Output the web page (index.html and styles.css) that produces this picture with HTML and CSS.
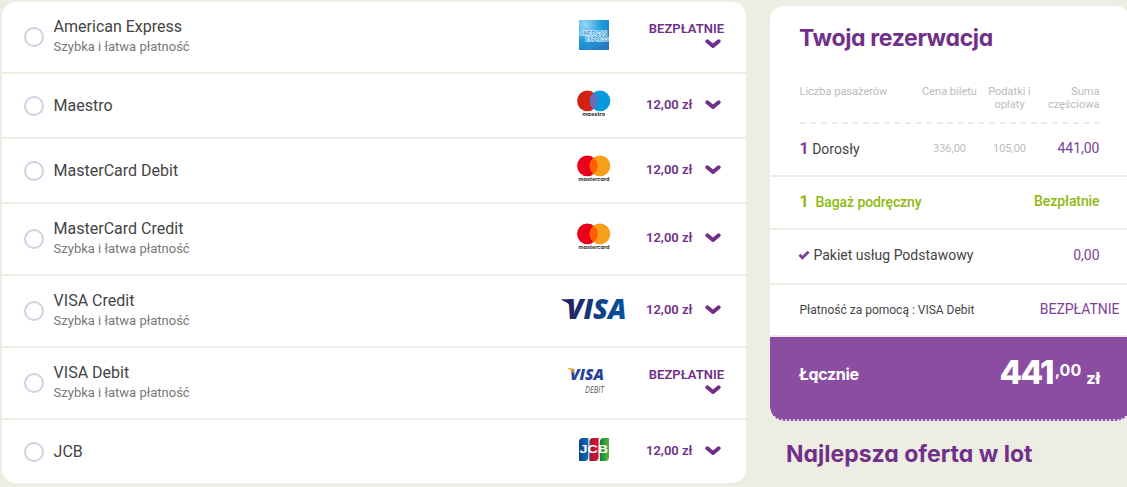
FILE: index.html
```html
<!DOCTYPE html>
<html lang="pl">
<head>
  <meta charset="UTF-8" />
  <meta name="viewport" content="width=device-width, initial-scale=1.0"/>
  <title>Płatność</title>
  <link rel="stylesheet" href="styles.css">
</head>
<body>

  <!-- Shared shapes -->
  <svg class="sprite" aria-hidden="true">
    <symbol id="chevron" viewBox="0 0 16 10">
      <path d="M2.3 2.3 L8 7.1 L13.7 2.3" fill="none" stroke="#70308a" stroke-width="3.9" stroke-linecap="round" stroke-linejoin="round"/>
    </symbol>
    <symbol id="mastercard" viewBox="0 0 34 28">
      <circle cx="10.4" cy="10.9" r="10.3" fill="#eb001b"/>
      <circle cx="23" cy="10.9" r="10.3" fill="#f79e1b"/>
      <path d="M16.7 2.7 A10.3 10.3 0 0 1 16.7 19.1 A10.3 10.3 0 0 1 16.7 2.7 Z" fill="#ff5f00"/>
      <text x="1.5" y="26.2" textLength="31" lengthAdjust="spacingAndGlyphs" class="logo-label">mastercard</text>
    </symbol>
  </svg>

  <main class="payments">
    <label class="method tall">
      <span class="radio"></span>
      <span class="name">American Express<small>Szybka i łatwa płatność</small></span>
      <span class="logo">
        <svg class="amex" viewBox="0 0 30 30">
          <defs>
            <radialGradient id="amex-bg" cx="0.2" cy="0.15" r="1.1">
              <stop offset="0" stop-color="#9ad7f5"/>
              <stop offset="0.5" stop-color="#1c9ddb"/>
              <stop offset="1" stop-color="#2a70c0"/>
            </radialGradient>
          </defs>
          <rect width="30" height="30" fill="url(#amex-bg)"/>
          <text x="1" y="15.2" textLength="27" lengthAdjust="spacingAndGlyphs" class="amex-text">AMERICAN</text>
          <text x="6.5" y="21.4" textLength="23" lengthAdjust="spacingAndGlyphs" class="amex-text">EXPRESS</text>
        </svg>
      </span>
      <span class="price free">BEZPŁATNIE<svg class="chevron"><use href="#chevron"/></svg></span>
    </label>

    <label class="method">
      <span class="radio"></span>
      <span class="name">Maestro</span>
      <span class="logo">
        <svg class="circles" viewBox="0 0 34 28">
          <circle cx="10.4" cy="10.9" r="10.3" fill="#d42114"/>
          <circle cx="23" cy="10.9" r="10.3" fill="#0499df"/>
          <path d="M16.7 2.7 A10.3 10.3 0 0 1 16.7 19.1 A10.3 10.3 0 0 1 16.7 2.7 Z" fill="#6c6bbd"/>
          <text x="5.2" y="26.2" textLength="23" lengthAdjust="spacingAndGlyphs" class="logo-label">maestro</text>
        </svg>
      </span>
      <span class="price">12,00 zł<svg class="chevron"><use href="#chevron"/></svg></span>
    </label>

    <label class="method">
      <span class="radio"></span>
      <span class="name">MasterCard Debit</span>
      <span class="logo"><svg class="circles"><use href="#mastercard"/></svg></span>
      <span class="price">12,00 zł<svg class="chevron"><use href="#chevron"/></svg></span>
    </label>

    <label class="method tall">
      <span class="radio"></span>
      <span class="name">MasterCard Credit<small>Szybka i łatwa płatność</small></span>
      <span class="logo"><svg class="circles"><use href="#mastercard"/></svg></span>
      <span class="price">12,00 zł<svg class="chevron"><use href="#chevron"/></svg></span>
    </label>

    <label class="method tall">
      <span class="radio"></span>
      <span class="name">VISA Credit<small>Szybka i łatwa płatność</small></span>
      <span class="logo">
        <svg class="visa" viewBox="0 0 66 22">
          <defs>
            <linearGradient id="visa-blue" gradientUnits="userSpaceOnUse" x1="4" y1="0" x2="64" y2="0">
              <stop offset="0" stop-color="#241f5d"/>
              <stop offset="0.5" stop-color="#123c80"/>
              <stop offset="1" stop-color="#0253a0"/>
            </linearGradient>
          </defs>
          <path d="M0.5 0.2 H8.6 Q10.6 0.3 11.2 2.3 L13.4 13 Q10 4 0.5 0.9 Z" fill="#241f5d"/>
          <text x="5.5" y="20.3" textLength="60" lengthAdjust="spacingAndGlyphs" class="visa-text" fill="url(#visa-blue)">VISA</text>
        </svg>
      </span>
      <span class="price">12,00 zł<svg class="chevron"><use href="#chevron"/></svg></span>
    </label>

    <label class="method tall">
      <span class="radio"></span>
      <span class="name">VISA Debit<small>Szybka i łatwa płatność</small></span>
      <span class="logo">
        <svg class="visa-debit" viewBox="0 0 38 26">
          <text x="3" y="12" textLength="34" lengthAdjust="spacingAndGlyphs" class="visa-debit-text">VISA</text>
          <path d="M0.4 0.3 H5 Q6.2 0.4 6.5 1.5 L7.7 6.8 Q5.5 2 0.4 0.7 Z" fill="#f0a52b"/>
          <text x="18" y="25" textLength="19" lengthAdjust="spacingAndGlyphs" class="debit-text">DEBIT</text>
        </svg>
      </span>
      <span class="price free">BEZPŁATNIE<svg class="chevron"><use href="#chevron"/></svg></span>
    </label>

    <label class="method">
      <span class="radio"></span>
      <span class="name">JCB</span>
      <span class="logo">
        <svg class="jcb" viewBox="0 0 30 23">
          <defs>
            <linearGradient id="jcb-blue"><stop offset="0" stop-color="#153d8a"/><stop offset="1" stop-color="#0572bd"/></linearGradient>
            <linearGradient id="jcb-red"><stop offset="0" stop-color="#7c2541"/><stop offset="0.7" stop-color="#d80f33"/></linearGradient>
            <linearGradient id="jcb-green"><stop offset="0" stop-color="#0b8440"/><stop offset="1" stop-color="#5cb637"/></linearGradient>
          </defs>
          <path d="M4 0 H9.4 V19 Q9.4 23 5.4 23 H0 V4 Q0 0 4 0 Z" fill="url(#jcb-blue)"/>
          <path d="M14.4 0 H19.6 V19 Q19.6 23 15.6 23 H10.4 V4 Q10.4 0 14.4 0 Z" fill="url(#jcb-red)"/>
          <path d="M24.8 0 H30 V19 Q30 23 26 23 H20.8 V4 Q20.8 0 24.8 0 Z" fill="url(#jcb-green)"/>
          <text x="0.5" y="15.2" textLength="28.5" lengthAdjust="spacingAndGlyphs" class="jcb-text">JCB</text>
        </svg>
      </span>
      <span class="price">12,00 zł<svg class="chevron"><use href="#chevron"/></svg></span>
    </label>
  </main>

  <aside class="sidebar">
    <section class="booking">
      <h2>Twoja rezerwacja</h2>

      <div class="fare fare-head">
        <span>Liczba pasażerów</span>
        <span>Cena biletu</span>
        <span>Podatki i opłaty</span>
        <span>Suma częściowa</span>
      </div>
      <svg class="dashes" width="300" height="2">
        <line x1="0" y1="1" x2="300" y2="1" stroke="#edede3" stroke-width="2" stroke-dasharray="6 4.5"/>
      </svg>

      <div class="fare fare-row">
        <span class="who"><b>1</b> Dorosły</span>
        <span>336,00</span>
        <span>105,00</span>
        <span class="sum">441,00</span>
      </div>

      <div class="line baggage">
        <span><b>1</b>Bagaż podręczny</span>
        <span>Bezpłatnie</span>
      </div>

      <div class="line package">
        <span><svg class="check" viewBox="0 0 12 10"><path d="M1.4 4.8 L4.4 7.7 L10.6 1.7" fill="none" stroke="#7d3f98" stroke-width="2.9"/></svg>Pakiet usług Podstawowy</span>
        <span class="sum">0,00</span>
      </div>

      <div class="line payment">
        <span>Płatność za pomocą : VISA Debit</span>
        <span class="sum">BEZPŁATNIE</span>
      </div>

      <div class="total">
        <span class="total-label">Łącznie</span>
        <span class="amount">441<span class="cents">,00</span><span class="currency">zł</span></span>
      </div>
    </section>

    <h2 class="offer">Najlepsza oferta w lot</h2>
  </aside>

</body>
</html>
```

FILE: styles.css
```css
:root {
  --page: #edede3;
  --purple: #70308a;
  --purple-light: #7d3f98;
  --purple-box: #8a4da1;
  --green: #8dba0e;
  --grey: #bbb;
}

* {
  box-sizing: border-box;
}

body {
  margin: 0;
  height: 487px;
  overflow: hidden;
  display: flex;
  align-items: flex-start;
  background: var(--page);
  color: #444;
  font-family: Roboto, sans-serif;
}

svg {
  display: block;
  flex: none;
  overflow: visible;
}

.sprite {
  display: none;
}

/* Payment methods */
.payments {
  flex: none;
  width: 744px;
  margin: 2px 24px 0 2px;
  background: #fff;
  border-radius: 14px;
  overflow: hidden;
}

.method {
  display: grid;
  grid-template-columns: 30px 505px 70px 1fr;
  height: 65px;
  padding: 0 22px;
  border-bottom: 2px solid var(--page);
}

.method.tall {
  height: 72px;
}

.method:last-child {
  height: 63px;
  border-bottom: 0;
}

.radio {
  width: 20px;
  height: 20px;
  margin-top: 22px;
  border: 2px solid #d9cbe3;
  border-radius: 50%;
}

.tall .radio {
  margin-top: 25px;
}

.name {
  padding-top: 22px;
  margin-left: -0.4px;
  font-size: 16px;
  line-height: 20px;
}

.tall .name {
  padding-top: 15px;
}

.name small {
  display: block;
  font-size: 13px;
  color: #777;
}

.logo {
  display: flex;
  justify-content: center;
  align-items: flex-start;
  padding-top: 16px;
}

.tall .logo {
  padding-top: 19px;
}

.circles {
  width: 34px;
  height: 28px;
}

.logo-label {
  font: bold 5.4px Inter, sans-serif;
  font-feature-settings: "cv11";
  fill: #333;
}

.tall .amex {
  width: 30px;
  height: 30px;
  margin-top: -1px;
}

.amex-text {
  font: bold 5.6px "Liberation Sans", sans-serif;
  fill: #2d9bd8;
  stroke: #fff;
  stroke-width: 1.1px;
  paint-order: stroke;
}

.visa {
  width: 66px;
  height: 22px;
  margin-top: 4px;
}

.visa-text {
  font: italic 800 28px "Open Sans", sans-serif;
}

.visa-debit {
  width: 38px;
  height: 26px;
  margin: 1px 16px 0 0;
}

.visa-debit-text {
  font: italic 800 16px "Open Sans", sans-serif;
  fill: #26429a;
}

.debit-text {
  font: italic 9px "Open Sans", sans-serif;
  fill: #555;
}

.jcb {
  width: 30px;
  height: 23px;
  margin-top: 2px;
}

.jcb-text {
  font: bold 10.5px "Liberation Sans", sans-serif;
  fill: #fff;
}

.price {
  display: flex;
  align-items: center;
  align-self: start;
  gap: 13px;
  margin-top: 21px;
  padding-left: 17px;
  font-size: 13px;
  font-weight: 600;
  line-height: 20px;
  white-space: nowrap;
  color: var(--purple);
}

.tall .price {
  margin-top: 24px;
}

.tall .price.free {
  flex-direction: column;
  align-items: flex-end;
  gap: 0;
  margin-top: 17px;
}

.free .chevron {
  margin-right: 3px;
}

.chevron {
  width: 16px;
  height: 10px;
}

/* Booking summary */
.sidebar {
  flex: none;
  width: 360px;
  padding-top: 6px;
}

.booking {
  height: 415px;
  background: #fff;
  border-radius: 14px;
  overflow: hidden;
}

h2 {
  margin: 0;
  font: bold 23px/30px Inter, sans-serif;
  font-feature-settings: "cv11";
  color: var(--purple);
  white-space: nowrap;
}

.booking h2 {
  padding: 17px 29px 0;
  letter-spacing: -0.35px;
}

.fare {
  display: grid;
  grid-template-columns: 120px 60px 60px 60px;
  margin: 0 30.5px 0 29.5px;
  font-size: 11px;
  line-height: 13px;
  text-align: center;
  color: var(--grey);
}

.fare > :first-child {
  text-align: left;
}

.fare > :last-child {
  text-align: right;
}

.fare-head {
  height: 69px;
  padding-top: 32px;
}

.dashes {
  margin-left: 30px;
}

.fare-row {
  height: 51px;
  padding-top: 14px;
  line-height: 20px;
}

.fare-row > span {
  padding-top: 1px;
}

.who {
  font-size: 14px;
  color: #444;
}

.who b,
.baggage b {
  font-size: 16px;
  font-weight: 700;
}

.who b,
.sum {
  color: var(--purple-light);
}

.sum {
  font-size: 14px;
}

.fare-row .sum {
  padding-top: 0;
}

.line {
  display: flex;
  justify-content: space-between;
  height: 53px;
  padding: 15px 30.5px 0 29.5px;
  border-top: 2px solid var(--page);
  font-size: 14px;
  line-height: 20px;
}

.baggage {
  padding-top: 14px;
  color: var(--green);
  font-weight: 500;
  letter-spacing: -0.1px;
}

.baggage span:first-child {
  padding-top: 1px;
}

.baggage b {
  margin-right: 7px;
}

.package {
  height: 55px;
}

.package span {
  display: flex;
  align-items: center;
  height: 20px;
}

.check {
  width: 12px;
  height: 10px;
  margin: 0 4px 0 -2px;
}

.payment {
  height: 54px;
  padding-top: 14px;
  padding-right: 10.5px;
  border-bottom: 2px solid var(--page);
  font-size: 12px;
}

.payment span:first-child {
  padding-top: 1px;
}

.total {
  display: flex;
  justify-content: space-between;
  height: 84px;
  padding: 17px 30px 0 29px;
  border-bottom: 2px dotted #d9c6e0;
  border-radius: 0 0 14px 14px;
  background: var(--purple-box);
  color: #fff;
  font-family: Inter, sans-serif;
  font-feature-settings: "cv11";
  font-weight: bold;
}

.total-label {
  font-size: 16px;
  line-height: 40px;
  letter-spacing: -0.3px;
}

.amount {
  font-size: 33px;
  font-weight: 800;
  line-height: 36px;
  letter-spacing: -1.8px;
}

.cents {
  margin-left: 2px;
  font-size: 16px;
  font-weight: bold;
  vertical-align: 8px;
  line-height: 1;
  letter-spacing: 0;
}

.currency {
  margin-left: 5px;
  font-size: 16px;
  line-height: 1;
  letter-spacing: 0;
}

.offer {
  margin: 18px 0 0 16px;
}
```
